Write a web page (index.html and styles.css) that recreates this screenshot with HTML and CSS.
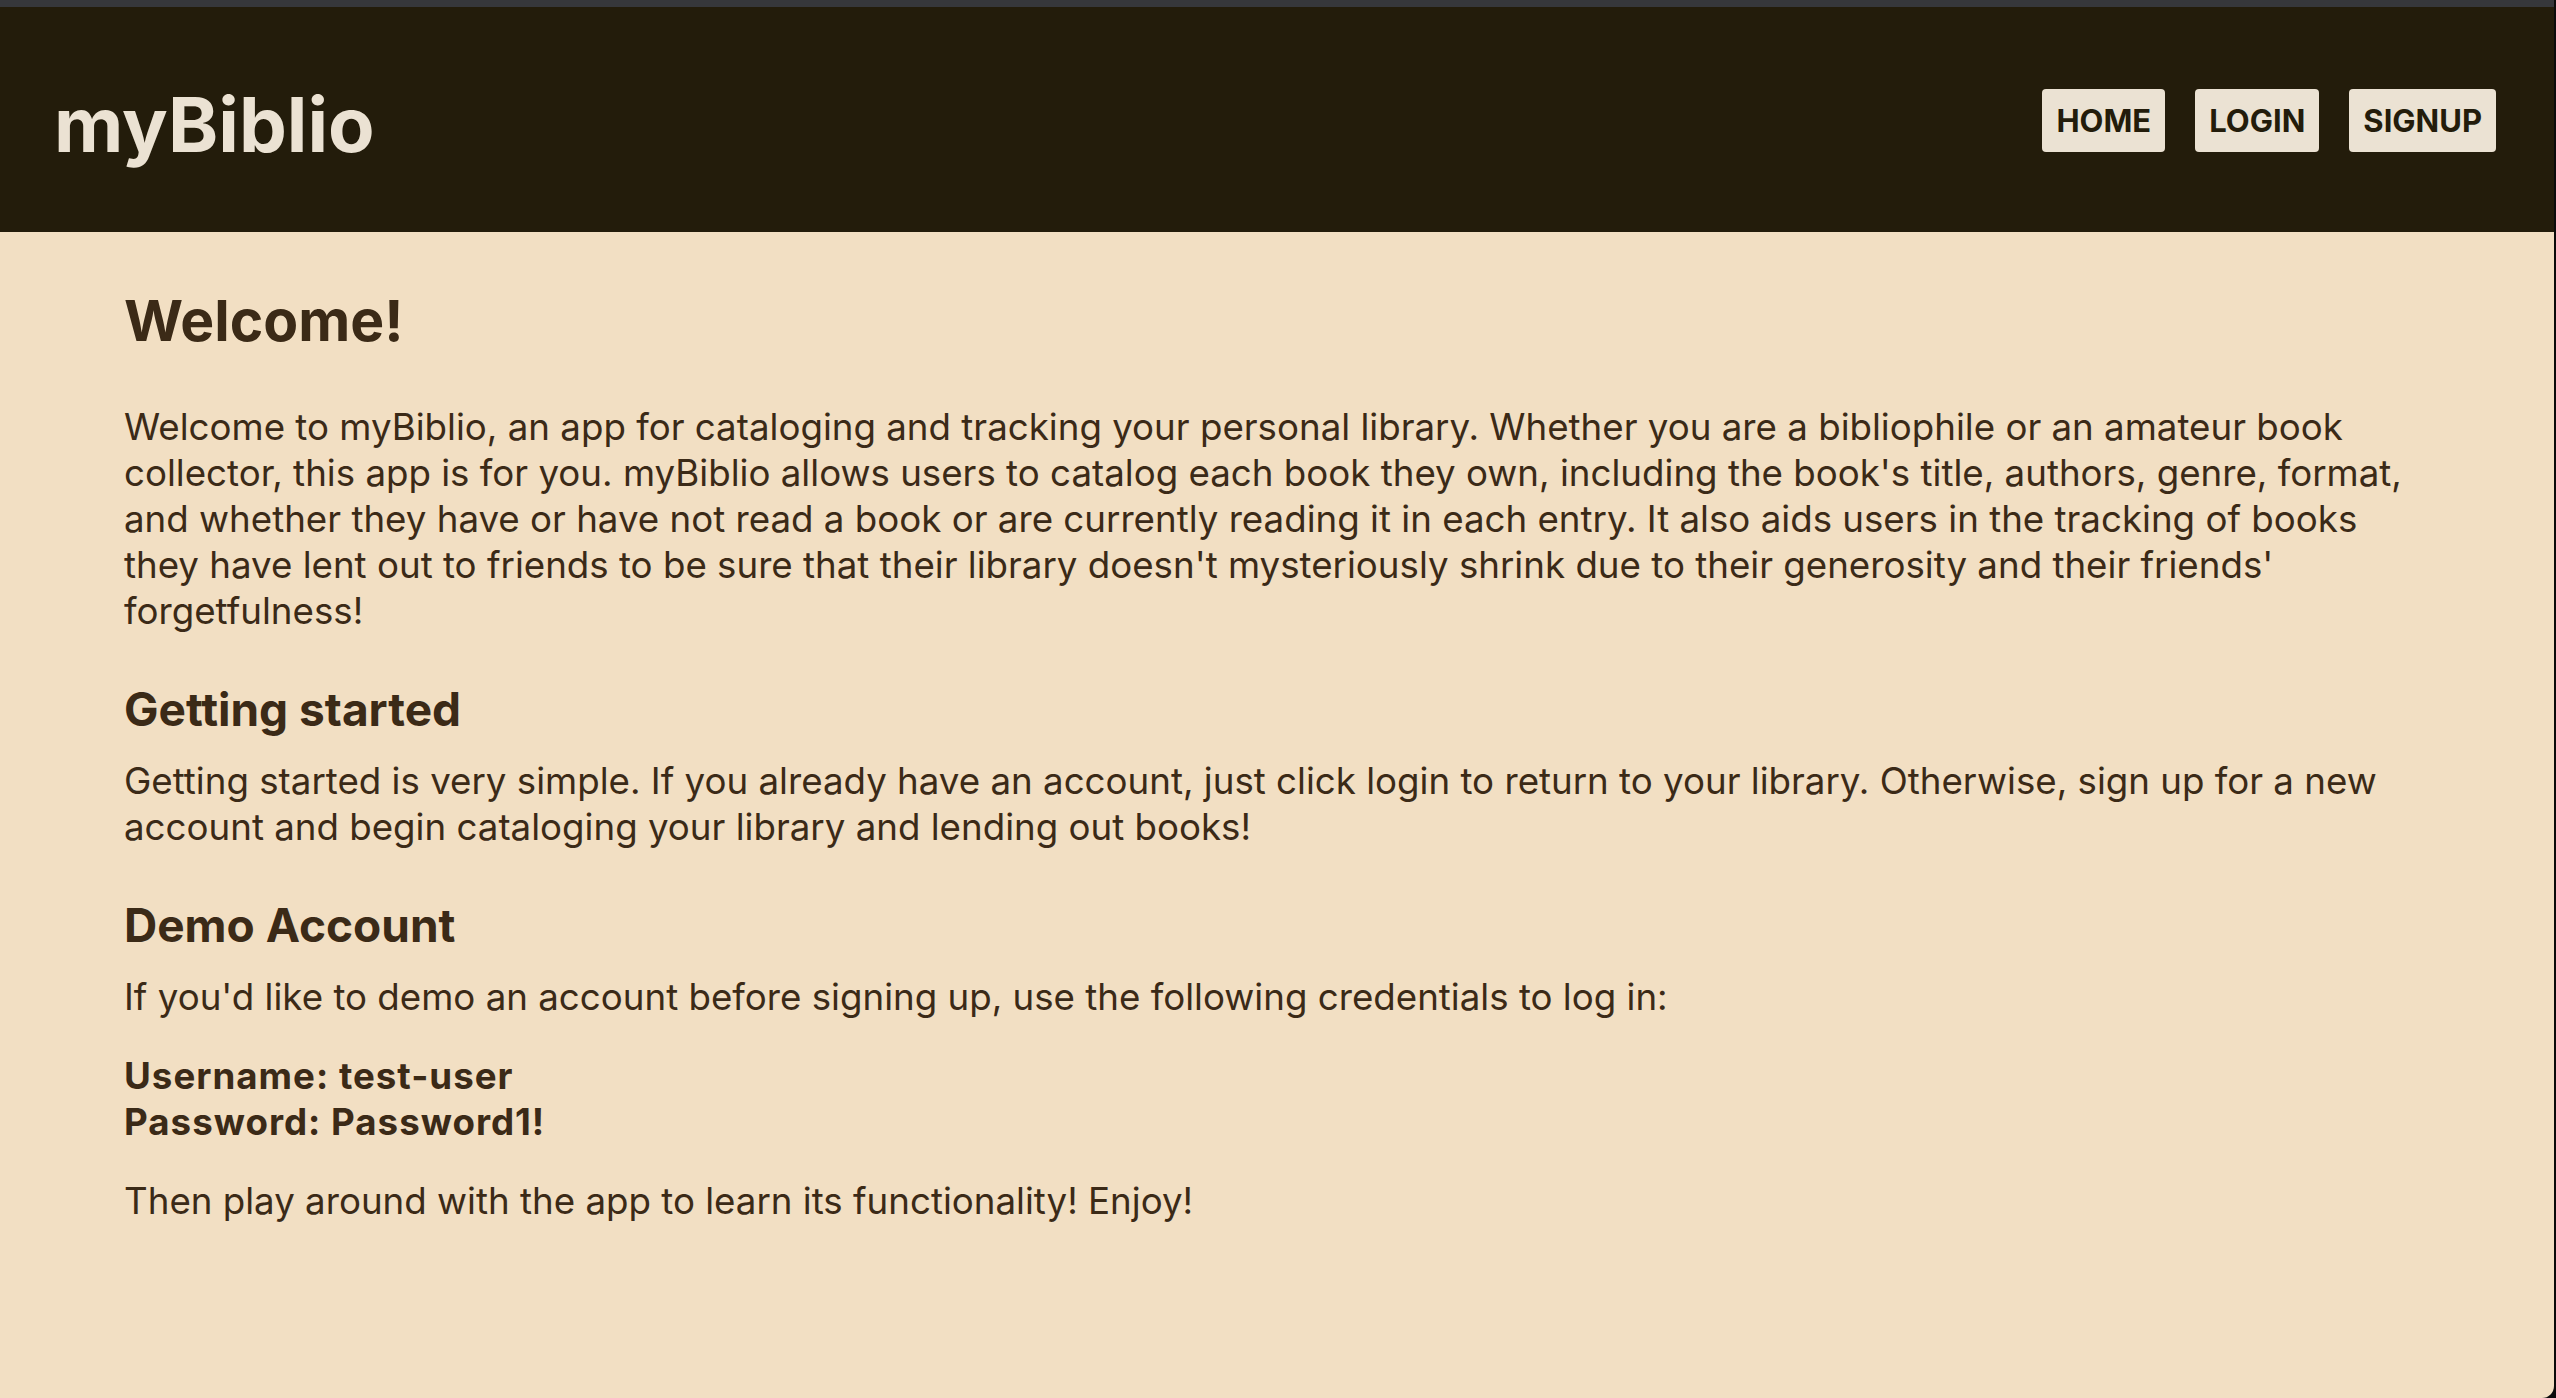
FILE: index.html
```html
<!DOCTYPE html>
<html lang="en">
<head>
<meta charset="utf-8">
<title>myBiblio</title>
<link rel="stylesheet" href="styles.css">
</head>
<body>
<div class="window">
  <header class="site-header">
    <h1 class="logo">myBiblio</h1>
    <nav class="nav">
      <a class="nav-btn" href="#">HOME</a>
      <a class="nav-btn" href="#">LOGIN</a>
      <a class="nav-btn" href="#">SIGNUP</a>
    </nav>
  </header>
  <main class="content">
    <h1 class="title">Welcome!</h1>
    <p class="lead">Welcome to myBiblio, an app for cataloging and tracking your personal library. Whether you are a bibliophile or an amateur book collector, this app is for you. myBiblio allows users to catalog each book they own, including the book's title, authors, genre, format, and whether they have or have not read a book or are currently reading it in each entry. It also aids users in the tracking of books they have lent out to friends to be sure that their library doesn't mysteriously shrink due to their generosity and their friends' forgetfulness!</p>
    <h2 class="section">Getting started</h2>
    <p>Getting started is very simple. If you already have an account, just click login to return to your library. Otherwise, sign up for a new account and begin cataloging your library and lending out books!</p>
    <h2 class="section">Demo Account</h2>
    <p>If you'd like to demo an account before signing up, use the following credentials to log in:</p>
    <p class="creds">Username: test-user<br>Password: Password1!</p>
    <p>Then play around with the app to learn its functionality! Enjoy!</p>
  </main>
</div>
</body>
</html>
```

FILE: styles.css
```css
html, body {
  margin: 0;
  padding: 0;
  height: 100%;
}

body {
  background: #0b0b0b;
  font-family: "Inter", "Noto Sans", sans-serif;
  color: #3b2a17;
}

.window {
  height: 100vh;
  margin-right: 2px;
  background: #f2dfc3;
  border-bottom-right-radius: 12px;
  overflow: hidden;
  display: flex;
  flex-direction: column;
}

.site-header {
  flex: none;
  box-sizing: border-box;
  height: 232px;
  border-top: 7px solid #36373b;
  background: #231c0b;
  display: flex;
  align-items: center;
  justify-content: space-between;
  padding: 8px 58px 0 54px;
}

.logo {
  margin: 0;
  font-size: 76px;
  font-weight: 700;
  color: #ebe2d3;
}

.nav {
  display: flex;
  gap: 30px;
  margin-top: -6px;
}

.nav-btn {
  display: flex;
  align-items: center;
  height: 63px;
  padding: 0 14px;
  background: #ebe2d3;
  color: #231c0b;
  border-radius: 4px;
  font-size: 31px;
  font-weight: 700;
  text-decoration: none;
}

.content {
  padding: 54px 124px 0 124px;
}

.title {
  margin: 0 0 49px;
  font-size: 57px;
  font-weight: 700;
  line-height: normal;
}

.content p {
  margin: 0 0 33px;
  font-size: 36.7px;
  line-height: 46px;
}

.section {
  margin: 47px 0 21px;
  font-size: 46px;
  font-weight: 700;
  line-height: normal;
}

.content .creds {
  font-weight: 700;
  letter-spacing: 1px;
}
```
